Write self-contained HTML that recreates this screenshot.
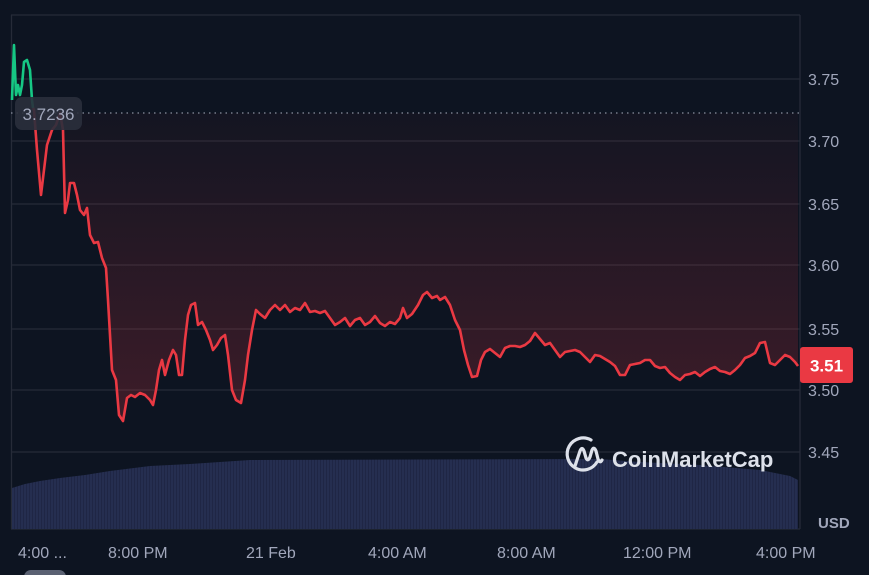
<!DOCTYPE html>
<html><head><meta charset="utf-8"><style>
html,body{margin:0;padding:0;background:#0d1421;width:869px;height:575px;overflow:hidden;font-family:"Liberation Sans",sans-serif}
</style></head><body>
<svg width="869" height="575" viewBox="0 0 869 575" xmlns="http://www.w3.org/2000/svg" style="position:absolute;left:0;top:0">
<defs>
<linearGradient id="rg" x1="0" y1="113" x2="0" y2="420" gradientUnits="userSpaceOnUse">
<stop offset="0" stop-color="#ea3943" stop-opacity="0.03"/>
<stop offset="1" stop-color="#ea3943" stop-opacity="0.22"/>
</linearGradient>
<pattern id="vb" width="3" height="10" patternUnits="userSpaceOnUse">
<rect width="3" height="10" fill="#252e50"/><rect x="2.3" width="0.7" height="10" fill="#1c2340"/>
</pattern>
</defs>
<rect x="11" y="15" width="789" height="514" fill="#0d1421"/>
<g stroke="#262b38" stroke-width="1.3">
<line x1="11" y1="15" x2="800" y2="15"/>
<line x1="11" y1="79" x2="800" y2="79"/>
<line x1="11" y1="141" x2="800" y2="141"/>
<line x1="11" y1="204" x2="800" y2="204"/>
<line x1="11" y1="265" x2="800" y2="265"/>
<line x1="11" y1="329" x2="800" y2="329"/>
<line x1="11" y1="390" x2="800" y2="390"/>
<line x1="11" y1="452" x2="800" y2="452"/>
<line x1="11.5" y1="15" x2="11.5" y2="529"/>
<line x1="800" y1="15" x2="800" y2="529"/>
<line x1="11" y1="529" x2="800" y2="529"/>
</g>
<polygon fill="url(#vb)" points="12,529 12,488 25,484 40,481 60,478 85,475 110,471 150,466 190,464 250,460 600,459 640,462 700,465 760,470 790,476 798,480 798,529"/>
<polygon fill="url(#rg)" points="32,113 34,110 37,150 41,195 44,170 47,145 52,130 56,125 60,113 63,130 65,213 68,200 70,183 74,183 77,195 80,210 84,215 87,208 90,235 94,243 98,242 102,258 106,268 108,300 112,370 116,380 119,415 123,421 127,398 131,395 135,397 140,393 145,395 150,400 153,405 156,390 159,370 162,360 165,375 169,360 173,350 176,355 179,375 182,375 185,340 188,315 191,305 195,303 198,325 202,322 206,330 210,340 213,350 217,345 221,338 225,335 228,355 232,390 236,400 241,403 245,380 248,355 252,330 256,310 260,314 265,318 270,310 275,305 280,310 285,305 290,312 295,308 300,310 305,303 310,312 315,311 320,313 325,311 330,318 335,325 340,322 345,318 350,326 355,320 360,318 365,325 370,322 375,316 380,323 385,326 390,322 395,324 400,318 403,308 407,318 412,314 418,305 423,295 427,292 432,298 437,296 440,300 445,297 450,305 455,320 460,330 464,350 468,365 472,377 477,376 481,360 485,352 490,349 495,353 500,357 505,348 510,346 515,346 520,347 525,345 530,341 535,333 540,339 545,345 550,343 555,350 560,357 565,352 570,351 575,350 580,352 585,357 590,362 595,355 600,356 605,359 610,362 615,366 620,375 625,375 630,365 635,364 640,363 645,360 650,360 655,366 660,368 665,367 670,373 675,377 680,380 685,375 690,374 695,372 700,376 705,372 710,369 715,367 720,371 725,372 730,374 735,370 740,365 745,358 750,356 755,353 760,343 765,342 770,363 775,365 780,360 785,355 790,357 795,362 798,366 798,113"/>
<line x1="11" y1="113" x2="800" y2="113" stroke="#8a90a0" stroke-width="1.3" stroke-dasharray="1.5 4"/>
<polyline fill="none" stroke="#16c784" stroke-width="2.6" stroke-linejoin="round" points="12,100 14,45 16,95 18,85 20,95 22,85 24,62 27,60 30,70 32,100 33,108"/>
<polyline fill="none" stroke="#ea3943" stroke-width="2.6" stroke-linejoin="round" points="33,108 34,110 37,150 41,195 44,170 47,145 52,130 56,125 60,113 63,130 65,213 68,200 70,183 74,183 77,195 80,210 84,215 87,208 90,235 94,243 98,242 102,258 106,268 108,300 112,370 116,380 119,415 123,421 127,398 131,395 135,397 140,393 145,395 150,400 153,405 156,390 159,370 162,360 165,375 169,360 173,350 176,355 179,375 182,375 185,340 188,315 191,305 195,303 198,325 202,322 206,330 210,340 213,350 217,345 221,338 225,335 228,355 232,390 236,400 241,403 245,380 248,355 252,330 256,310 260,314 265,318 270,310 275,305 280,310 285,305 290,312 295,308 300,310 305,303 310,312 315,311 320,313 325,311 330,318 335,325 340,322 345,318 350,326 355,320 360,318 365,325 370,322 375,316 380,323 385,326 390,322 395,324 400,318 403,308 407,318 412,314 418,305 423,295 427,292 432,298 437,296 440,300 445,297 450,305 455,320 460,330 464,350 468,365 472,377 477,376 481,360 485,352 490,349 495,353 500,357 505,348 510,346 515,346 520,347 525,345 530,341 535,333 540,339 545,345 550,343 555,350 560,357 565,352 570,351 575,350 580,352 585,357 590,362 595,355 600,356 605,359 610,362 615,366 620,375 625,375 630,365 635,364 640,363 645,360 650,360 655,366 660,368 665,367 670,373 675,377 680,380 685,375 690,374 695,372 700,376 705,372 710,369 715,367 720,371 725,372 730,374 735,370 740,365 745,358 750,356 755,353 760,343 765,342 770,363 775,365 780,360 785,355 790,357 795,362 798,366"/>
<rect x="15" y="97" width="67" height="33" rx="7" fill="#2a2f3c" fill-opacity="0.9"/>
<text x="48.5" y="120" text-anchor="middle" font-size="17" fill="#a1a7bb" font-family="Liberation Sans">3.7236</text>
<g font-size="16" fill="#a1a7bb" font-family="Liberation Sans">
<text x="808" y="85">3.75</text>
<text x="808" y="147">3.70</text>
<text x="808" y="210">3.65</text>
<text x="808" y="271">3.60</text>
<text x="808" y="335">3.55</text>
<text x="808" y="396">3.50</text>
<text x="808" y="458">3.45</text>
<text x="818" y="528" font-weight="bold" font-size="15">USD</text>
<text x="18" y="558">4:00 ...</text>
<text x="108" y="558">8:00 PM</text>
<text x="246" y="558">21 Feb</text>
<text x="368" y="558">4:00 AM</text>
<text x="497" y="558">8:00 AM</text>
<text x="623" y="558">12:00 PM</text>
<text x="756" y="558">4:00 PM</text>
</g>
<rect x="800" y="347" width="53" height="36" rx="3" fill="#ea3943"/>
<text x="826.5" y="371.5" text-anchor="middle" font-size="17" font-weight="bold" fill="#fff">3.51</text>
<g fill="none" stroke="#dde1ea" stroke-width="3.2" stroke-linecap="round" stroke-linejoin="round">
<path d="M597,462 A16,16 0 1 1 591,440"/>
<path d="M575,466 L580,451 Q582,446 584,451 L586,458 Q588,462 590,457 L592,450 Q594,446 596,451 L598,459 Q600,464 602,460"/>
</g>
<text x="612" y="467" font-size="22" font-weight="bold" fill="#dde1ea" font-family="Liberation Sans">CoinMarketCap</text>
<rect x="24" y="570" width="42" height="14" rx="7" fill="#5a6172"/>
</svg>
</body></html>
